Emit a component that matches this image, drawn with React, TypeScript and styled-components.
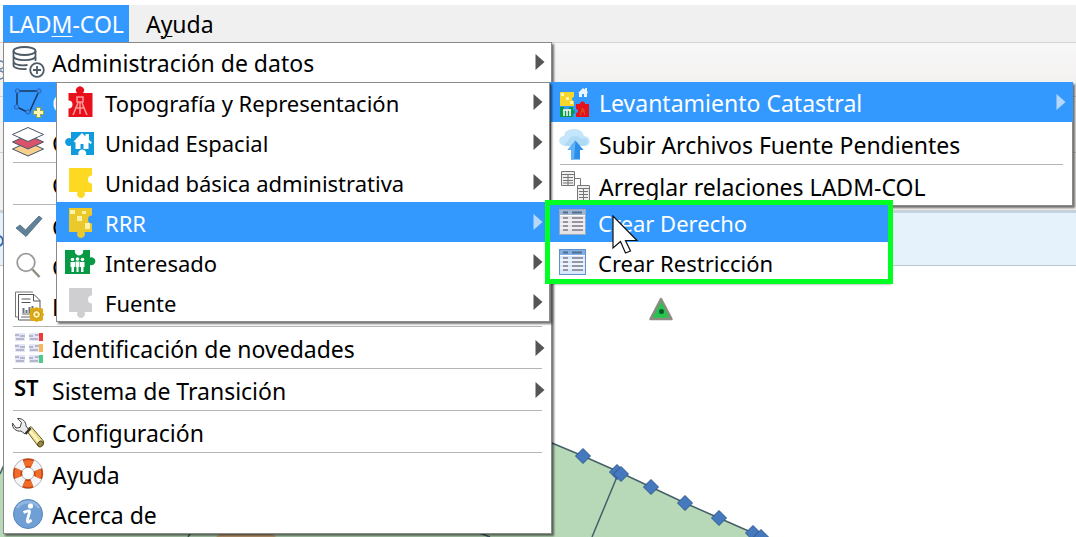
import React from 'react';
import styled, { createGlobalStyle } from 'styled-components';

const GlobalStyle = createGlobalStyle`
  *, *::before, *::after { box-sizing: border-box; }
  body {
    margin: 0;
    background: #fff;
    color: #000;
    font-family: "Noto Sans", "Open Sans", sans-serif;
    font-size: 23px;
    line-height: 32px;
    overflow: hidden;
  }
`;

const Window = styled.div`
  min-height: 100vh;
  display: flex;
  flex-direction: column;
  padding-top: 5px;
`;

const MenuBar = styled.nav`
  display: flex;
  height: 37px;
  margin-left: 3px;
  background: #f0f0f0;
`;

const BarEntry = styled.div`
  position: relative;
  z-index: 1;
`;

const BarButton = styled.button<{ $open?: boolean }>`
  display: block;
  height: 37px;
  padding: 1px ${p => (p.$open ? 5 : 17)}px 0;
  border: 0;
  background: ${p => (p.$open ? '#3399ff' : 'transparent')};
  color: ${p => (p.$open ? '#fff' : '#000')};
  font: inherit;
  white-space: nowrap;
`;

const Mnemonic = styled.span`
  text-decoration: underline;
  text-decoration-thickness: 1px;
  text-underline-offset: 3px;
`;

const ToolBar = styled.div<{ $height: number; $shade?: boolean }>`
  height: ${p => p.$height}px;
  background: ${p => (p.$shade ? 'linear-gradient(#f8f8f8, #f2efee)' : '#f4f2f1')};
  border-bottom: 1px solid #cfcfcf;
  border-top: ${p => (p.$shade ? '1px solid #d4d4d4' : '0')};
`;

const InfoStrip = styled.div`
  height: 55px;
  background: #e5f1fb;
  border-top: 2px solid #c3d3e6;
  border-bottom: 1px solid #bcc6d2;
`;

const MapView = styled.main`
  flex: 1;
  background: #fff;
  svg { display: block; }
`;

const Menu = styled.ul<{ $width: number; $left?: number; $level?: number; $compact?: boolean }>`
  position: absolute;
  top: ${p => (p.$level === undefined ? '100%' : '0')};
  left: ${p => p.$left ?? 0}px;
  z-index: ${p => p.$level ?? 1};
  width: ${p => p.$width}px;
  margin: 0;
  padding: 0;
  list-style: none;
  font-size: ${p => (p.$compact ? 22 : 23)}px;
  background: #fff;
  box-shadow: inset 0 0 0 1px #8a8a8a, 2px 2px 2px rgba(0, 0, 0, 0.55);
`;

const HighlightedMenu = styled(Menu)`
  &::after {
    content: "";
    position: absolute;
    inset: -2px -4px;
    border: 5px solid #00ff22;
    pointer-events: none;
  }
`;

const Entry = styled.li`
  position: relative;
`;

const EntryButton = styled.button<{ $active?: boolean }>`
  display: flex;
  align-items: center;
  gap: 8px;
  width: 100%;
  height: 40px;
  padding: 0 7px 0 9px;
  border: 0;
  background: ${p => (p.$active ? '#3399ff' : 'transparent')};
  color: ${p => (p.$active ? '#fff' : '#000')};
  font: inherit;
  text-align: left;
  white-space: nowrap;
`;

const IconSlot = styled.span`
  flex: none;
  width: 32px;
  height: 32px;
  svg { display: block; overflow: visible; }
`;

const Label = styled.span`
  flex: 1;
  padding-top: 2px;
`;

const Divider = styled.li<{ $faint?: boolean }>`
  height: 2px;
  margin: 0 10px;
  border-top: 1px solid ${p => (p.$faint ? 'transparent' : '#b4b4b4')};
`;

const Initials = styled.span`
  display: block;
  padding-left: 2px;
  font-size: 22px;
  line-height: 26px;
  font-weight: 600;
`;

const Cursor = styled.svg`
  position: absolute;
  z-index: 1;
  left: 63px;
  top: 13px;
`;

const Svg = ({ children }: { children: React.ReactNode }) => (
  <svg width="32" height="32" viewBox="1 0 32 32" fill="none" aria-hidden="true">{children}</svg>
);

const Arrow = ({ light }: { light?: boolean }) => (
  <svg width="10" height="16" viewBox="0 0 10 16" aria-hidden="true">
    <path d="M0.500 0L9.500 8L0.500 16Z" fill={light ? '#b5d8fb' : '#555'} />
  </svg>
);

const DatabaseIcon = () => (
  <Svg>
    <g stroke="#4d5b66" strokeWidth="1.800">
      <ellipse cx="13.500" cy="5" rx="11" ry="4" fill="#fff" />
      <path d="M2.500 5v14.500c0 2 4 4 13 3.500M24.500 5v10M2.500 10c0 5.500 22 5.500 22 0M2.500 15c0 4 8 5 14 4" />
      <circle cx="26" cy="24" r="6.800" fill="#fff" />
      <path d="M26 20v8M22 24h8" />
    </g>
  </Svg>
);

const PolygonIcon = () => (
  <Svg>
    <path d="M6 5H28L18 27L6 21Z" stroke="#17365f" strokeWidth="1.500" />
    <g fill="#3f8be0" stroke="#1f68c4">
      <circle cx="6.500" cy="5" r="2.200" /><circle cx="28" cy="5" r="2.200" />
      <circle cx="5.500" cy="21" r="2.200" /><circle cx="17" cy="26" r="2.200" />
    </g>
    <path d="M27.500 21v11M22 26.500h11" stroke="#8fa35a" strokeWidth="5" />
    <path d="M27.500 22v9M23 26.500h9" stroke="#fffbb0" strokeWidth="3" />
  </Svg>
);

const LayersIcon = () => (
  <Svg>
    <g stroke="#45556b" strokeWidth="1" strokeLinejoin="round">
      <path d="M1.500 23L17 16l15.500 7L17 30Z" fill="#f8cf8f" />
      <path d="M1.500 16L17 9l15.500 7L17 23Z" fill="#d9546b" />
      <path d="M1.500 8.500L17 1.500l15.500 7L17 15.500Z" fill="#fff" />
    </g>
  </Svg>
);

const CheckIcon = () => (
  <Svg>
    <path d="M5 18L9 15L14.500 20L28 6L31 8.500L15 26.500Z" fill="#5f8299" stroke="#5a7689" strokeLinejoin="round" />
  </Svg>
);

const SearchIcon = () => (
  <Svg>
    <circle cx="15" cy="12.500" r="8.800" stroke="#999" strokeWidth="1.800" />
    <path d="M21.500 19.500L28.500 27" stroke="#8d8d80" strokeWidth="2.500" />
  </Svg>
);

const ReportIcon = () => (
  <Svg>
    <path d="M22 2H4.500V27H20" stroke="#777" />
    <path d="M7.500 4.500H23L29 10.500V30H7.500Z" fill="#fff" stroke="#555" />
    <path d="M22.500 5v6H29M10.500 9h9M10.500 12.500h9" stroke="#555" />
    <path d="M12.500 23v-5M15.500 23v-3M18.500 23v-6M21.500 23v-7" stroke="#687780" strokeWidth="2" />
    <path d="M11 24h12M10 27h10" stroke="#666" />
    <rect x="19" y="18" width="13" height="13" rx="2" fill="#dfa914" />
    <path d="M25.500 17v15M18 24.500h15M20 19l11 11M31 19L20 30" stroke="#dfa914" strokeWidth="2" />
    <circle cx="25.500" cy="24.500" r="4" fill="#fff1a8" stroke="#b98a10" />
    <circle cx="25.500" cy="24.500" r="1.500" fill="#dfa914" />
  </Svg>
);

const ChangesIcon = () => (
  <Svg>
    {[1, 12, 23].map((y, i) => (
      <g key={y}>
        <path d={`M4 ${y + 4}h10M18 ${y + 4}h10`} stroke="#e4e5f8" strokeWidth="8" />
        <path d={`M4 ${y + 2}h4M9 ${y + 3}h5M18 ${y + 3}h4M24 ${y + 2}h4M5 ${y + 6}h8M19 ${y + 6}h8`} stroke="#858a99" strokeWidth="1.200" />
        <rect x="28" y={y} width="4" height="8" fill={['#ee3c3c', '#f7b75c', '#4dcc89'][i]} />
      </g>
    ))}
  </Svg>
);

const WrenchIcon = () => (
  <Svg>
    <path d="M15 14l5-3.500L32.500 25c1 3-3 6-5.500 5Z" fill="#f0df8b" stroke="#665f35" />
    <path d="M19 15l9 11" stroke="#fff8c8" strokeWidth="2" />
    <path d="M1.500 7c-1 5 4 9 8.500 8l4 3 4-4-3-4c0-4-3-8-8.500-7.500l4 4-1.500 5-4 .500Z" fill="#ececec" stroke="#444" strokeLinejoin="round" />
    <path d="M14.500 18l5-6" stroke="#333" strokeWidth="2.500" />
    <ellipse cx="29.500" cy="28" rx="3" ry="2.500" fill="#9a8b41" stroke="#554d27" transform="rotate(-45 29.500 28)" />
  </Svg>
);

const LifebuoyIcon = () => (
  <Svg>
    <circle cx="17" cy="15.500" r="10.500" stroke="#a9b0b5" strokeWidth="9.500" />
    <circle cx="17" cy="15.500" r="10.500" stroke="#f3f5f6" strokeWidth="8" />
    <circle cx="17" cy="15.500" r="10.500" stroke="#c74310" strokeWidth="9" strokeDasharray="8.247" strokeDashoffset="4.123" />
    <circle cx="17" cy="15.500" r="10.500" stroke="#ef6c2b" strokeWidth="6" strokeDasharray="8.247" strokeDashoffset="4.123" />
  </Svg>
);

const InfoIcon = () => (
  <Svg>
    <circle cx="17" cy="16" r="14.500" fill="#6f9fd4" stroke="#5485bd" />
    <path d="M6 10a13 13 0 0 1 22 0" stroke="#91b7e0" strokeWidth="3" />
    <circle cx="19.500" cy="8" r="2.600" fill="#fff" />
    <path d="M12.500 14.500c3-1.500 5-2 6-1.500s-3 9-2 10.500 2.500-.500 4-1.500" stroke="#fff" strokeWidth="2.800" />
  </Svg>
);

const TopographyIcon = () => (
  <Svg>
    <path d="M4.500 7H13a4 4 0 1 1 6 0h9.500v24h-24v-8.500a4 4 0 1 0 0-8Z" fill="#e8101b" />
    <g stroke="#ff9b9b" strokeWidth="1.500">
      <path d="M13 11h6v5h-6zM16 16v12M14 17L9 29M18 17l5 12M11 22h10" />
    </g>
  </Svg>
);

const HousePieceIcon = () => (
  <Svg>
    <path d="M7 6h23v23h-8a4 4 0 1 0-7.500 0H7v-9.500a4 4 0 1 1 0-7Z" fill="#109bdc" />
    <path d="M9.500 15.500L18 7l3.500 3.500V8H25v6l3 2.500-1.500 1.500-2-1.500V23h-5v-5h-3v5h-5v-6.500Z" fill="#fff" />
  </Svg>
);

const pieceShape = 'M5 2h23v7.500a4 4 0 1 0 0 8V26h-7.500a4 4 0 1 1-7 0H5Z';

const PieceIcon = ({ color, spots }: { color: string; spots?: string }) => (
  <Svg>
    <path d={pieceShape} fill={color} />
    {spots && <path d="M6 4h5v4H6zM13 10h5v5h-5zM21 17h5v6h-5zM18 5h4v3h-4z" fill={spots} />}
  </Svg>
);

const PeopleIcon = () => (
  <Svg>
    <path d="M1 4h10a4.200 4.200 0 1 0 8 0h7v7.500a4 4 0 1 1 0 7.500v9H1Z" fill="#079a45" />
    <g fill="#fff">
      <circle cx="8.500" cy="13.500" r="1.800" /><circle cx="13.500" cy="13" r="1.800" /><circle cx="18.500" cy="13.500" r="1.800" />
      <path d="M6.500 16h4.500v5h-1v5H7.500v-5h-1zM11.500 15.500h4v5.500h-1v5h-2v-5h-1zM16 16h4.500v5h-1v5H17v-5h-1z" />
    </g>
  </Svg>
);

const SurveyIcon = () => (
  <Svg>
    <path d="M2 6h14v5a2 2 0 1 0 0 4v5H2Z" fill="#f6d629" />
    <path d="M3 7h3v3H3zM8 11h3v3H8zM12 15h3v3h-3z" fill="#fff6b4" />
    <path d="M2 21h4a2 2 0 1 0 5 0h4v3a2 2 0 1 1 0 4v3H2Z" fill="#08994a" />
    <path d="M5 24h8M6 24v6M9 24v6M12 24v6" stroke="#fff" strokeWidth="1.500" />
    <path d="M18 18h4a2.500 2.500 0 1 1 5 0h4v13H18v-4a2 2 0 1 0 0-4Z" fill="#e5121d" />
    <path d="M22.500 29l2-7 2.500 7M23 25h4" stroke="#c95f16" />
    <path d="M20 7l5-5 2 1.500V2h2v3l1 2h-1v4h-3V8h-2v3h-3V7Z" fill="#e9f5ff" />
  </Svg>
);

const UploadIcon = () => (
  <Svg>
    <path d="M7 18c-8-1-7-10-1-10C7 3 10 1 16 1s9 3 10 7c7 0 8 10 1 10Z" fill="#c5e6fa" />
    <path d="M10 13c1-5 10-7 13-2 3-2 7-1 7 3-1 4-4 4-6 4H8c-2-2 0-4 2-5Z" fill="#aedaf6" />
    <path d="M17.500 12.500L25.500 22H22v9.500h-9V22H9.500Z" fill="#2d8eea" />
    <path d="M17.500 12.500L9.500 22H13v9.500h3Z" fill="#61b3f8" />
  </Svg>
);

const RelationsIcon = () => (
  <Svg>
    <g stroke="#777">
      <path d="M3.500 1.500h13v14h-13zM3.500 4.500h13M5 7.500h10M5 10.500h10M5 13h10M10 5v10" fill="#eee" />
      <path d="M17 8.500h5.500V15" />
      <path d="M19.500 15.500h12v16h-12zM19.500 18.500h12M21 21.500h9M21 24.500h9M21 27.500h9M25.500 19v12" fill="#eee" />
    </g>
  </Svg>
);

const FormIcon = ({ active }: { active?: boolean }) => (
  <Svg>
    <rect x="2.500" y="3.500" width="26" height="25" fill={active ? '#e4e2e4' : '#d9e8f8'} stroke={active ? '#9aabc0' : '#5d92cd'} />
    <rect x="3" y="4" width="25" height="5" fill={active ? '#a1b7d0' : '#82afe0'} />
    <path d="M6 6.500h5M15 6.500h10" stroke="#516d92" strokeWidth="2" />
    <path d="M6 12h5M15 12h11M6 16h5M15 16h11M6 20h5M15 20h11M6 24h5M15 24h11" stroke="#7f7b8b" strokeWidth="1.300" />
    <path d="M3 9.500h25M3 14h25M3 18h25M3 22h25" stroke="#fff" />
  </Svg>
);

type ItemProps = {
  icon?: React.ReactNode;
  label: string;
  active?: boolean;
  arrow?: boolean;
  children?: React.ReactNode;
};

const Item = ({ icon, label, active, arrow, children }: ItemProps) => (
  <Entry role="none">
    <EntryButton type="button" role="menuitem" $active={active} aria-haspopup={arrow ? 'menu' : undefined}>
      <IconSlot>{icon}</IconSlot>
      <Label>{label}</Label>
      {arrow && <Arrow light={active} />}
    </EntryButton>
    {children}
  </Entry>
);

const RightsMenu = () => (
  <HighlightedMenu role="menu" $width={340} $left={493} $level={3} $compact>
    <Item icon={<FormIcon active />} label="Crear Derecho" active />
    <Item icon={<FormIcon />} label="Crear Restricción" />
    <Cursor width="28" height="40" viewBox="0 0 28 40" aria-hidden="true">
      <path d="M1 1V33L8.500 26.500L13.500 38L18.500 36L13.500 25.500H25Z" fill="#fff" stroke="#111" strokeWidth="1.200" />
    </Cursor>
  </HighlightedMenu>
);

const SurveyMenu = () => (
  <Menu role="menu" $width={494} $left={53} $level={2} $compact>
    <Item icon={<TopographyIcon />} label="Topografía y Representación" arrow />
    <Item icon={<HousePieceIcon />} label="Unidad Espacial" arrow />
    <Item icon={<PieceIcon color="#fdd922" />} label="Unidad básica administrativa" arrow />
    <Item icon={<PieceIcon color="#ecc92b" spots="#fff3a6" />} label="RRR" active arrow>
      <RightsMenu />
    </Item>
    <Item icon={<PeopleIcon />} label="Interesado" arrow />
    <Item icon={<PieceIcon color="#cfcfd2" />} label="Fuente" arrow />
  </Menu>
);

const CaptureMenu = () => (
  <Menu role="menu" $width={523} $left={547} $level={1}>
    <Item icon={<SurveyIcon />} label="Levantamiento Catastral" active arrow />
    <Divider role="separator" $faint />
    <Item icon={<UploadIcon />} label="Subir Archivos Fuente Pendientes" />
    <Divider role="separator" />
    <Item icon={<RelationsIcon />} label="Arreglar relaciones LADM-COL" />
  </Menu>
);

const MainMenu = () => (
  <Menu role="menu" $width={549}>
    <Item icon={<DatabaseIcon />} label="Administración de datos" arrow />
    <Item icon={<PolygonIcon />} label="C" active>
      <CaptureMenu />
      <SurveyMenu />
    </Item>
    <Item icon={<LayersIcon />} label="C" />
    <Divider role="separator" />
    <Item label="C" />
    <Divider role="separator" />
    <Item icon={<CheckIcon />} label="C" />
    <Item icon={<SearchIcon />} label="C" />
    <Item icon={<ReportIcon />} label="R" />
    <Divider role="separator" />
    <Item icon={<ChangesIcon />} label="Identificación de novedades" arrow />
    <Divider role="separator" />
    <Item icon={<Initials>ST</Initials>} label="Sistema de Transición" arrow />
    <Divider role="separator" />
    <Item icon={<WrenchIcon />} label="Configuración" />
    <Divider role="separator" />
    <Item icon={<LifebuoyIcon />} label="Ayuda" />
    <Item icon={<InfoIcon />} label="Acerca de" />
  </Menu>
);

const vertices = [[583, 190], [617, 206], [621, 208], [651, 221], [685, 237], [719, 252], [753, 267], [761, 271]];

const ParcelMap = () => (
  <svg width="100%" height="271" aria-hidden="true">
    <path d="M0 205L8 190L552 177L583 190L619 206L651 221L685 237L719 252L753 267L775 277H0Z" fill="#b8d9b8" />
    <path d="M216 271L222 266H270L276 271Z" fill="#c9a57c" />
    <g stroke="#45606a" strokeWidth="1.500" fill="none">
      <path d="M540 172L583 190L619 206L651 221L685 237L719 252L753 267L775 277M619 206L592 271M0 208L8 190M188 271L194 262M466 262L490 271" />
    </g>
    {vertices.map(([x, y]) => (
      <path key={x} d={`M${x} ${y - 7.5}l7.500 7.500l-7.500 7.500l-7.500 -7.500Z`} fill="#4579bd" stroke="#2d568e" />
    ))}
    <path d="M661 33L671.500 53H650.500Z" fill="#27c34f" stroke="#8d8a80" strokeWidth="2.500" strokeLinejoin="round" />
    <circle cx="661.500" cy="45.500" r="2.500" fill="#0a5d29" />
  </svg>
);

export default function App() {
  return (
    <>
      <GlobalStyle />
      <Window>
        <MenuBar>
          <BarEntry>
            <BarButton type="button" $open aria-haspopup="menu" aria-expanded="true">
              LAD<Mnemonic>M</Mnemonic>-COL
            </BarButton>
            <MainMenu />
          </BarEntry>
          <BarButton type="button">
            A<Mnemonic>y</Mnemonic>uda
          </BarButton>
        </MenuBar>
        <ToolBar $height={55} $shade>
          <svg width="6" height="40" aria-hidden="true">
            <g fill="none" stroke="#6080ad" strokeWidth="1.500">
              <circle cx="0" cy="22" r="4" /><circle cx="0" cy="32" r="4" />
            </g>
          </svg>
        </ToolBar>
        <ToolBar $height={56} />
        <ToolBar $height={58} />
        <InfoStrip>
          <svg width="6" height="50" aria-hidden="true">
            <circle cx="-2" cy="28" r="5" fill="none" stroke="#2f67b5" strokeWidth="2" />
          </svg>
        </InfoStrip>
        <MapView><ParcelMap /></MapView>
      </Window>
    </>
  );
}
